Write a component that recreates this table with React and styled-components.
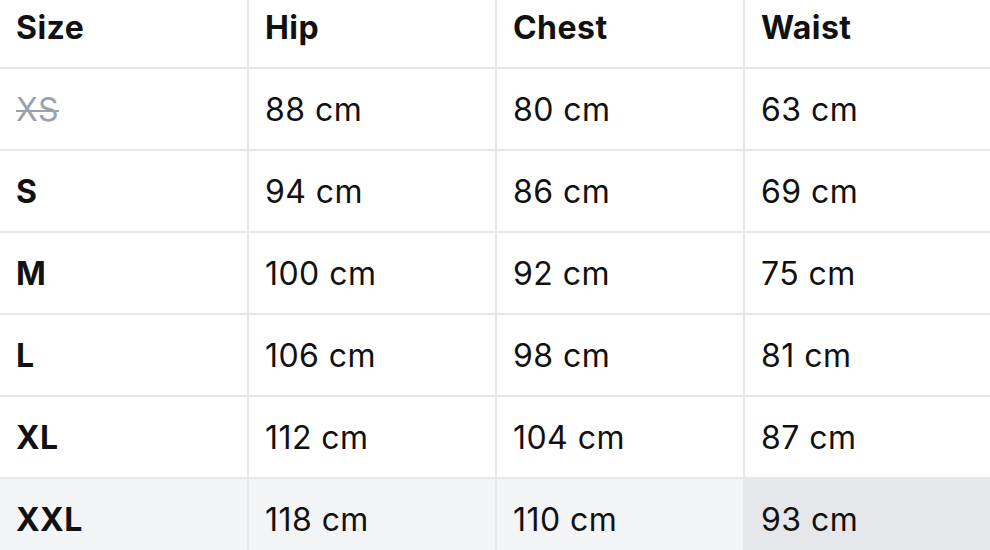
import React from "react";
import styled, { createGlobalStyle } from "styled-components";

const GlobalStyle = createGlobalStyle`
  html, body { margin: 0; padding: 0; background: #ffffff; }
  body { font-family: "Inter", "Open Sans", sans-serif; overflow: hidden; }
`;

const Wrapper = styled.div`
  width: 990px;
  margin-top: -13px;
`;

const Table = styled.table`
  width: 100%;
  table-layout: fixed;
  border-collapse: separate;
  border-spacing: 0;
  font-size: 32px;
  letter-spacing: 0.45px;
  color: #111111;
`;

const Col = styled.col`
  width: ${(p) => (p.$w ? `${p.$w}px` : "auto")};
`;

const Row = styled.tr`
  background: ${(p) => (p.$shaded ? "#f3f4f6" : "#ffffff")};
`;

const cellBase = `
  box-sizing: border-box;
  height: 82px;
  padding: 0 16px;
  text-align: left;
  vertical-align: middle;
  border-bottom: 2px solid #e5e7eb;
  border-right: 2px solid #e5e7eb;
  white-space: nowrap;
  &:last-child { border-right: none; }
`;

const HeadCell = styled.th`
  ${cellBase}
  font-weight: 650;
`;

const Cell = styled.td`
  ${cellBase}
  font-weight: ${(p) => (p.$bold ? 650 : 400)};
  background: ${(p) => (p.$active ? "#e5e7eb" : "transparent")};
`;

const Struck = styled.span`
  color: #9aa1ad;
  font-weight: 400;
  text-decoration: line-through;
  text-decoration-thickness: 2px;
`;

const rows = [
  { size: "XS", hip: "88 cm", chest: "80 cm", waist: "63 cm", soldOut: true },
  { size: "S", hip: "94 cm", chest: "86 cm", waist: "69 cm" },
  { size: "M", hip: "100 cm", chest: "92 cm", waist: "75 cm" },
  { size: "L", hip: "106 cm", chest: "98 cm", waist: "81 cm" },
  { size: "XL", hip: "112 cm", chest: "104 cm", waist: "87 cm" },
  { size: "XXL", hip: "118 cm", chest: "110 cm", waist: "93 cm", hovered: true },
];

export default function App() {
  return (
    <>
      <GlobalStyle />
      <Wrapper>
        <Table>
          <colgroup>
            <Col $w={249} />
            <Col $w={248} />
            <Col $w={248} />
            <Col />
          </colgroup>
          <thead>
            <Row>
              <HeadCell>Size</HeadCell>
              <HeadCell>Hip</HeadCell>
              <HeadCell>Chest</HeadCell>
              <HeadCell>Waist</HeadCell>
            </Row>
          </thead>
          <tbody>
            {rows.map((r) => (
              <Row key={r.size} $shaded={r.hovered}>
                <Cell $bold>{r.soldOut ? <Struck>{r.size}</Struck> : r.size}</Cell>
                <Cell>{r.hip}</Cell>
                <Cell>{r.chest}</Cell>
                <Cell $active={r.hovered}>{r.waist}</Cell>
              </Row>
            ))}
          </tbody>
        </Table>
      </Wrapper>
    </>
  );
}
